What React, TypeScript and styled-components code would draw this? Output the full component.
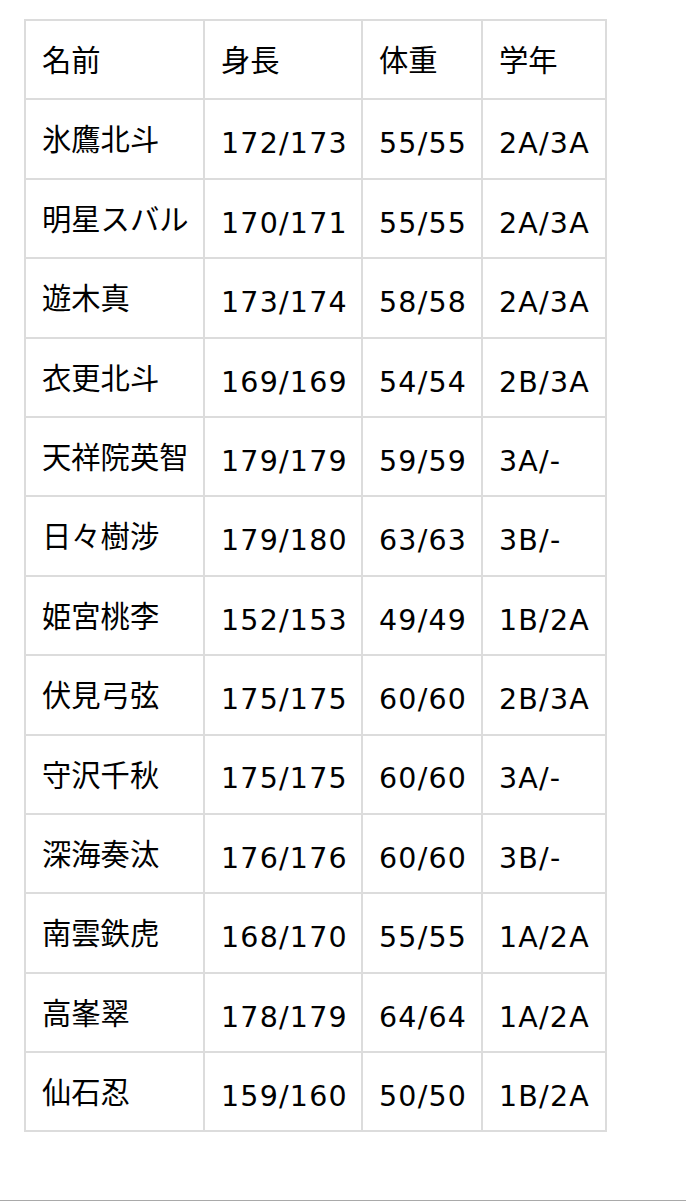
import React from "react";
import styled, { createGlobalStyle } from "styled-components";

const Global = createGlobalStyle`
  html, body { margin: 0; padding: 0; background: #ffffff; }
  body { font-family: "DejaVu Sans", "Noto Sans CJK JP", sans-serif; color: #000; }
`;

const Page = styled.div`
  width: 686px;
  height: 1201px;
  display: flex;
  flex-direction: column;
  overflow: hidden;
`;

const Table = styled.div`
  margin: 19px 0 0 24px;
  display: grid;
  grid-template-columns: 177px 156px 118px 122px;
  grid-auto-rows: 77.4px;
  gap: 2px;
  padding: 2px;
  background: #dcdcdc;
  width: max-content;
`;

const Cell = styled.div<{ $num?: boolean }>`
  background: #ffffff;
  display: flex;
  align-items: center;
  padding: ${(p) => (p.$num ? "11px 0 0 16px" : "0 0 2px 16px")};
  font-size: ${(p) => (p.$num ? "28.5px" : "29.3px")};
  line-height: 1;
  letter-spacing: ${(p) => (p.$num ? "1.2px" : "0")};
  white-space: nowrap;
  font-family: ${(p) =>
    p.$num ? `"DejaVu Sans", "Noto Sans CJK JP", sans-serif` : `"Noto Sans CJK JP", sans-serif`};
`;

const Footer = styled.div`
  margin-top: auto;
  height: 1px;
  background: #a9a9a9;
  width: 100%;
`;

const header = ["名前", "身長", "体重", "学年"];

const rows: [string, string, string, string][] = [
  ["氷鷹北斗", "172/173", "55/55", "2A/3A"],
  ["明星スバル", "170/171", "55/55", "2A/3A"],
  ["遊木真", "173/174", "58/58", "2A/3A"],
  ["衣更北斗", "169/169", "54/54", "2B/3A"],
  ["天祥院英智", "179/179", "59/59", "3A/-"],
  ["日々樹涉", "179/180", "63/63", "3B/-"],
  ["姫宮桃李", "152/153", "49/49", "1B/2A"],
  ["伏見弓弦", "175/175", "60/60", "2B/3A"],
  ["守沢千秋", "175/175", "60/60", "3A/-"],
  ["深海奏汰", "176/176", "60/60", "3B/-"],
  ["南雲鉄虎", "168/170", "55/55", "1A/2A"],
  ["高峯翠", "178/179", "64/64", "1A/2A"],
  ["仙石忍", "159/160", "50/50", "1B/2A"],
];

export default function App() {
  return (
    <>
      <Global />
      <Page>
        <Table>
          {header.map((h) => (
            <Cell key={h}>{h}</Cell>
          ))}
          {rows.map((r) => (
            <React.Fragment key={r[0]}>
              <Cell>{r[0]}</Cell>
              <Cell $num>{r[1]}</Cell>
              <Cell $num>{r[2]}</Cell>
              <Cell $num>{r[3]}</Cell>
            </React.Fragment>
          ))}
        </Table>
        <Footer />
      </Page>
    </>
  );
}
